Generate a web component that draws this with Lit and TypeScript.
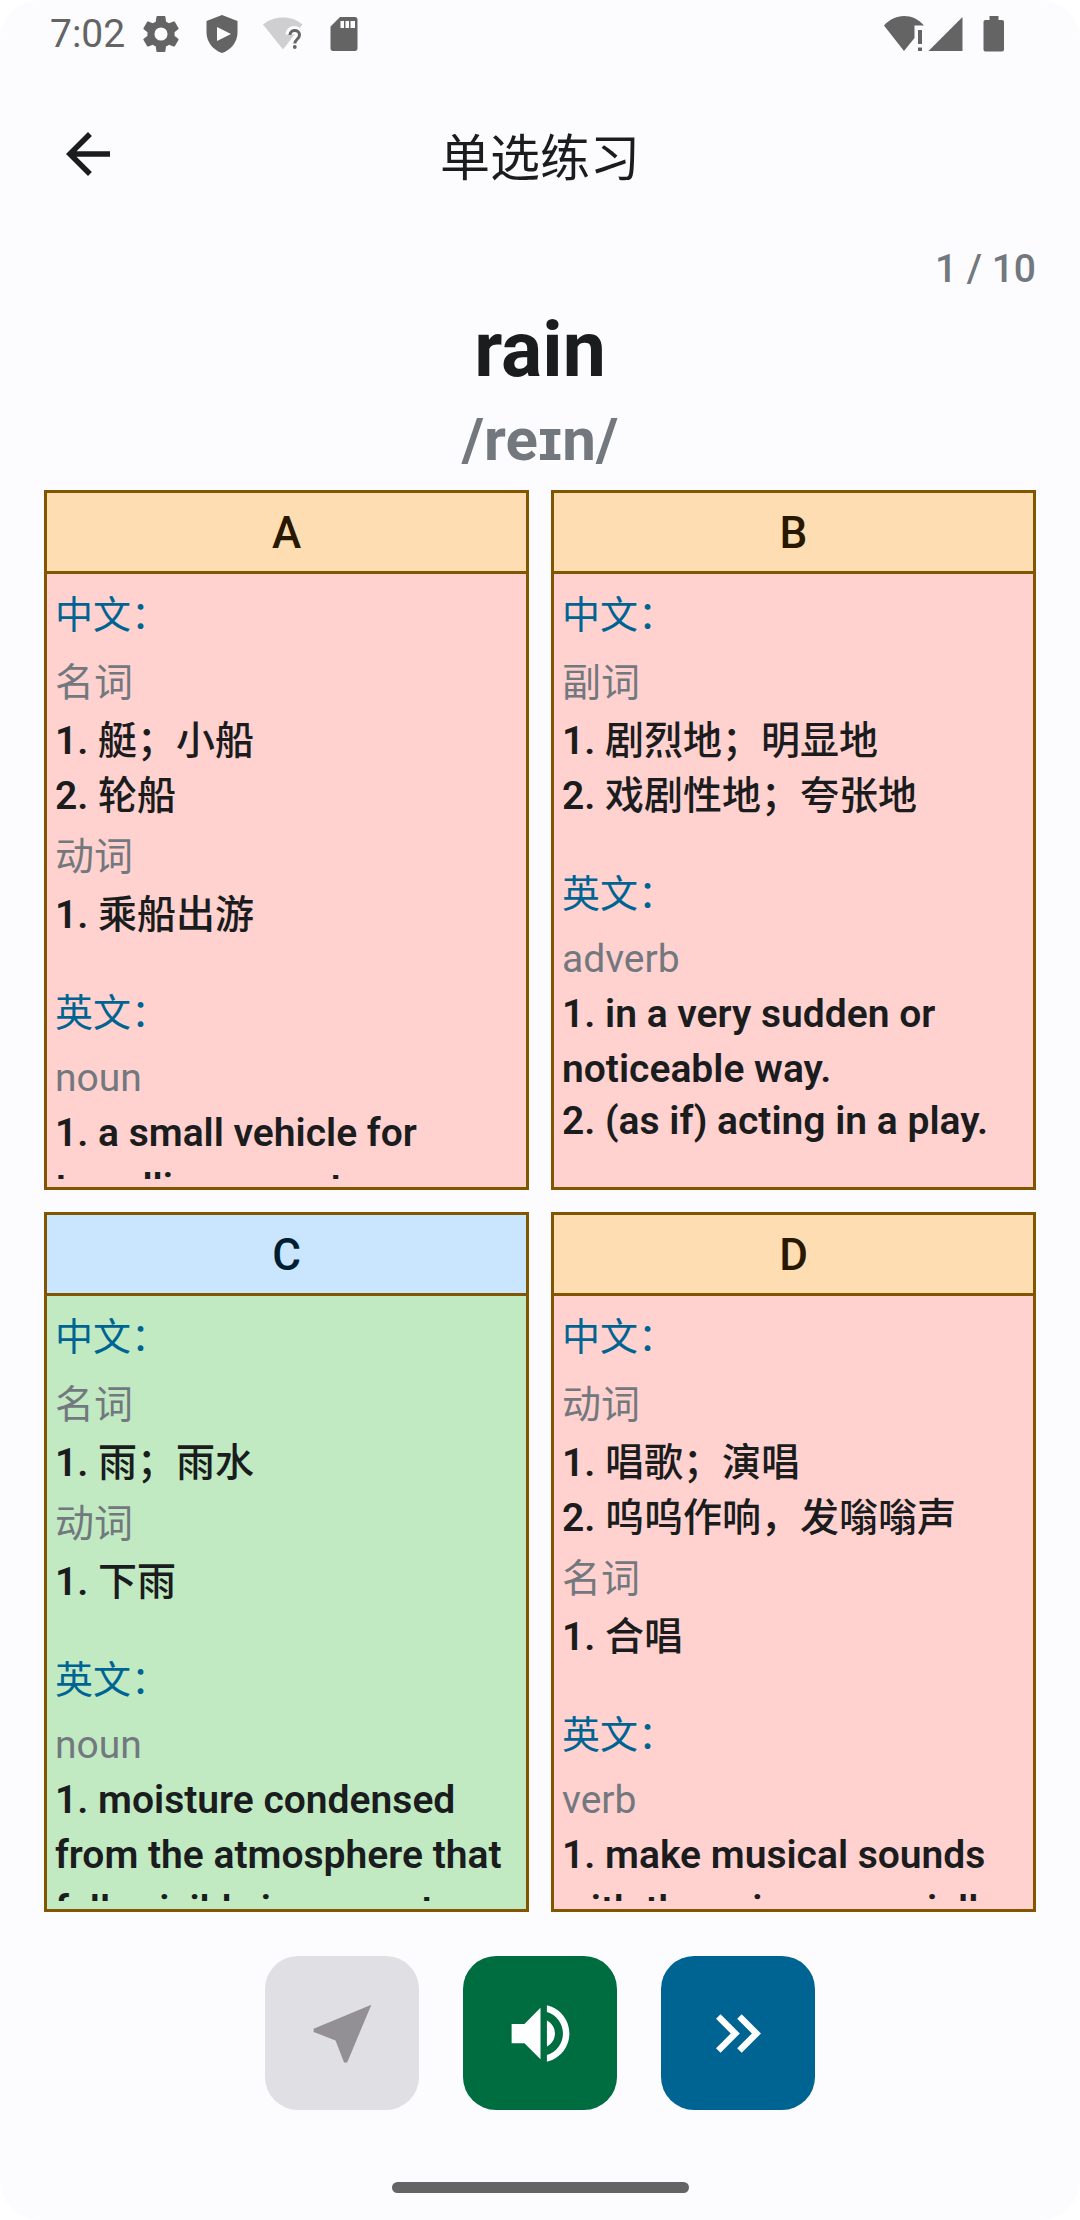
import { LitElement, html, svg, css } from "lit";
import { customElement, property } from "lit/decorators.js";
import { classMap } from "lit/directives/class-map.js";

interface Sense {
  pos: string;
  defs: string[];
}

interface Option {
  letter: string;
  correct: boolean;
  zh: Sense[];
  en: Sense[];
}

const OPTIONS: Option[] = [
  {
    letter: "A",
    correct: false,
    zh: [
      { pos: "名词", defs: ["艇；小船", "轮船"] },
      { pos: "动词", defs: ["乘船出游"] },
    ],
    en: [{ pos: "noun", defs: ["a small vehicle for travelling on water."] }],
  },
  {
    letter: "B",
    correct: false,
    zh: [{ pos: "副词", defs: ["剧烈地；明显地", "戏剧性地；夸张地"] }],
    en: [
      {
        pos: "adverb",
        defs: ["in a very sudden or noticeable way.", "(as if) acting in a play."],
      },
    ],
  },
  {
    letter: "C",
    correct: true,
    zh: [
      { pos: "名词", defs: ["雨；雨水"] },
      { pos: "动词", defs: ["下雨"] },
    ],
    en: [
      {
        pos: "noun",
        defs: ["moisture condensed from the atmosphere that falls visibly in separate drops."],
      },
    ],
  },
  {
    letter: "D",
    correct: false,
    zh: [
      { pos: "动词", defs: ["唱歌；演唱", "呜呜作响，发嗡嗡声"] },
      { pos: "名词", defs: ["合唱"] },
    ],
    en: [
      {
        pos: "verb",
        defs: ["make musical sounds with the voice, especially words with a tune."],
      },
    ],
  },
];

@customElement("status-bar")
export class StatusBar extends LitElement {
  static styles = css`
    :host {
      box-sizing: border-box;
      display: flex;
      justify-content: space-between;
      align-items: center;
      height: 66px;
      padding: 2px 66px 0 50px;
      color: #646464;
      fill: currentColor;
    }
    .group {
      display: flex;
      align-items: center;
    }
    .time {
      font-size: 39px;
      line-height: 44px;
      margin-right: 16px;
    }
    .notices {
      gap: 21px;
    }
    .icon {
      display: block;
      width: 40px;
      height: 40px;
    }
    .signal {
      margin-right: 10px;
    }
  `;

  render() {
    return html`
      <div class="group">
        <span class="time">7:02</span>
        <div class="group notices">
          <svg class="icon" viewBox="1 1 22 22" aria-hidden="true">
            <path
              d="M19.5 12c0-.3 0-.6-.1-.9l2.1-1.7c.2-.2.3-.5.1-.7l-2-3.4c-.1-.2-.4-.3-.7-.2l-2.5 1c-.5-.4-1-.7-1.600-.9l-.4-2.700c0-.3-.2-.4-.5-.4h-3.900c-.3 0-.5.2-.5.4l-.4 2.700c-.6.2-1.100.5-1.600.9l-2.500-1c-.2-.1-.5 0-.6.2l-2 3.400c-.1.2-.1.5.1.7l2.100 1.700c0 .3-.1.6-.1.9s0 .6.1.9l-2.100 1.700c-.2.2-.3.5-.1.7l2 3.400c.1.2.4.3.6.2l2.500-1c.5.4 1 .7 1.600.9l.4 2.700c0 .3.3.4.500.4h3.900c.3 0 .5-.2.500-.4l.4-2.700c.6-.2 1.100-.5 1.600-.9l2.500 1c.2.1.5 0 .7-.2l2-3.400c.1-.2.1-.5-.1-.7l-2.100-1.700c.1-.3.1-.6.1-.9zM12 15.600a3.600 3.600 0 1 1 0-7.200 3.600 3.600 0 0 1 0 7.200z"
            />
          </svg>
          <svg class="icon" viewBox="0 0 40 40" aria-hidden="true">
            <path
              fill-rule="evenodd"
              d="M20 1 35.500 7v11.500c0 9.500-6.500 17.500-15.500 20.500C11 36 4.500 28 4.500 18.500V7zM15 13v14l14-7z"
            />
          </svg>
          <svg class="icon" viewBox="0 0 40 40" aria-hidden="true">
            <path fill="#cfcfd2" d="M0 10.500C5.500 6 12.500 3.500 20 3.500s14 2.500 19.500 7L20 35.500z" />
            <path
              fill="none"
              stroke="#fcfcff"
              stroke-width="8"
              d="M26.500 20.500c0-6 9.500-6 9.500 0 0 4-4.700 4.500-4.700 8.500v5"
            />
            <path
              fill="none"
              stroke="currentColor"
              stroke-width="3"
              d="M27 21c0-6 9.500-6 9.500 0 0 4-4.700 4.500-4.700 8.500"
            />
            <circle cx="31.800" cy="33" r="1.900" />
          </svg>
          <svg class="icon" viewBox="0 0 40 40" aria-hidden="true">
            <path
              fill-rule="evenodd"
              d="M16 3h15c1.500 0 2.500 1 2.500 2.500v29c0 1.500-1 2.500-2.500 2.500H9c-1.500 0-2.500-1-2.500-2.500V12.500zM16.500 7v7h3.500V7zm5 0v7H25V7zm5 0v7H31V7z"
            />
          </svg>
        </div>
      </div>
      <div class="group">
        <svg class="icon" viewBox="0 0 40 40" aria-hidden="true">
          <path d="M0 11.500C5.500 5.500 12.500 2 20 2s14.500 3 20 9.500H30.500V24L20 37z" />
          <path d="M34 16h4v14h-4zM34 33.500h4V37h-4z" />
        </svg>
        <svg class="icon signal" viewBox="0 0 40 40" aria-hidden="true">
          <path d="M4.500 37 38.500 3v34z" />
        </svg>
        <svg class="icon" viewBox="0 0 40 40" aria-hidden="true">
          <path
            d="M15.500 2h9v4h3.500c1.200 0 2 .8 2 2v27.500c0 1.200-.8 2-2 2H11.500c-1.200 0-2-.8-2-2V8c0-1.200.8-2 2-2h4z"
          />
        </svg>
      </div>
    `;
  }
}

@customElement("option-card")
export class OptionCard extends LitElement {
  @property({ attribute: false }) option!: Option;

  static styles = css`
    :host {
      display: block;
      min-width: 0;
      min-height: 0;
    }
    .card {
      box-sizing: border-box;
      height: 100%;
      display: flex;
      flex-direction: column;
      border: 3px solid #825500;
      background: #ffd2cf;
    }
    .letter {
      flex: none;
      border: 0;
      border-bottom: 3px solid #825500;
      padding: 2px 0 0;
      background: #ffddb3;
      color: #291800;
      font: inherit;
      font-size: 44px;
      font-weight: 500;
      line-height: 76px;
    }
    .correct {
      background: #c1eac3;
    }
    .correct .letter {
      background: #cae6ff;
      color: #001e30;
    }
    .body {
      flex: 1;
      min-height: 0;
      margin: 8px;
      overflow: hidden;
    }
    .head,
    .pos,
    .def {
      margin: 0;
      font-size: 39px;
      font-weight: 400;
    }
    .head {
      padding-bottom: 2px;
      font-size: 38px;
      line-height: 66px;
      color: #006493;
    }
    .pos {
      padding: 3px 0 1px;
      line-height: 60px;
      color: #72787e;
    }
    .def {
      line-height: 55px;
      font-weight: 600;
      color: #1a1c1e;
    }
    .han {
      font-weight: 500;
    }
    .english {
      margin-top: 37px;
    }
    .english .pos {
      padding: 3px 0 0;
      line-height: 55px;
    }
    .english .def + .def {
      margin-top: -3px;
    }
  `;

  private chinese(list: Sense[]) {
    return list.map(
      (s) => html`
        <p class="pos">${s.pos}</p>
        ${s.defs.map(
          (d, i) => html`<p class="def">${`${i + 1}. `}<span class="han">${d}</span></p>`
        )}
      `
    );
  }

  private english(list: Sense[]) {
    return list.map(
      (s) => html`
        <p class="pos">${s.pos}</p>
        ${s.defs.map((d, i) => html`<p class="def">${`${i + 1}. ${d}`}</p>`)}
      `
    );
  }

  render() {
    const o = this.option;
    return html`
      <article class=${classMap({ card: true, correct: o.correct })}>
        <button class="letter" type="button">${o.letter}</button>
        <div class="body">
          <section>
            <h2 class="head">中文：</h2>
            ${this.chinese(o.zh)}
          </section>
          <section class="english">
            <h2 class="head">英文：</h2>
            ${this.english(o.en)}
          </section>
        </div>
      </article>
    `;
  }
}

const ACTIONS = [
  {
    kind: "submit",
    label: "提交",
    disabled: true,
    icon: svg`<path d="M21 3 3 10.530v.980l6.840 2.650L12.480 21h.980z" />`,
  },
  {
    kind: "speak",
    label: "朗读",
    disabled: false,
    icon: svg`<path d="M3 9v6h4l5 5V4L7 9H3zm13.500 3c0-1.770-1.020-3.290-2.500-4.030v8.050c1.480-.730 2.500-2.250 2.500-4.020zM14 3.230v2.060c2.890.860 5 3.540 5 6.710s-2.110 5.850-5 6.710v2.060c4.010-.910 7-4.490 7-8.770s-2.990-7.860-7-8.770z" />`,
  },
  {
    kind: "next",
    label: "下一题",
    disabled: false,
    icon: svg`<path d="M6.410 6 5 7.410 9.580 12 5 16.590 6.410 18l6-6zM13 6l-1.410 1.410L16.170 12l-4.580 4.590L13 18l6-6z" />`,
  },
];

@customElement("app-root")
export class AppRoot extends LitElement {
  static styles = css`
    :host {
      display: block;
      height: 100vh;
      background: #ffffff;
      font-family: Roboto, "Noto Sans CJK SC", sans-serif;
      color: #1a1c1e;
    }
    .screen {
      height: 100%;
      display: flex;
      flex-direction: column;
      overflow: hidden;
      border-radius: 40px;
      background: #fcfcff;
    }
    .bar {
      box-sizing: border-box;
      flex: none;
      display: grid;
      grid-template-columns: 66px 1fr 66px;
      align-items: center;
      height: 176px;
      padding: 0 55px;
    }
    .back {
      border: 0;
      padding: 0;
      background: none;
      color: inherit;
    }
    .back-icon {
      display: block;
      width: 66px;
      height: 66px;
      fill: currentColor;
    }
    .title {
      margin: 0;
      padding-top: 10px;
      text-align: center;
      font-size: 50px;
      font-weight: 400;
      line-height: 66px;
    }
    .count {
      margin: 0;
      padding: 0 44px 2px;
      text-align: right;
      font-size: 39px;
      font-weight: 500;
      line-height: 55px;
      color: #72787e;
    }
    .word,
    .ipa {
      margin: 0;
      text-align: center;
      font-weight: 700;
    }
    .word {
      font-size: 77px;
      line-height: 102px;
    }
    .ipa {
      font-size: 60px;
      line-height: 78px;
      color: #72787e;
    }
    .options {
      flex: 1;
      min-height: 0;
      display: grid;
      grid-template-columns: repeat(2, minmax(0, 1fr));
      grid-template-rows: repeat(2, minmax(0, 1fr));
      gap: 22px;
      padding: 11px 44px 44px;
    }
    .actions {
      display: flex;
      justify-content: center;
      gap: 44px;
      padding-bottom: 44px;
    }
    .action {
      display: grid;
      place-items: center;
      width: 154px;
      height: 154px;
      border: 0;
      border-radius: 33px;
      padding: 0;
      color: #ffffff;
    }
    .submit {
      background: #e0dfe3;
      color: #929094;
    }
    .speak {
      background: #006d41;
    }
    .next {
      background: #006493;
    }
    .action-icon {
      width: 77px;
      height: 77px;
      fill: currentColor;
    }
    .gesture {
      flex: none;
      display: grid;
      place-items: center;
      height: 66px;
    }
    .handle {
      width: 297px;
      height: 11px;
      border-radius: 6px;
      background: #646464;
    }
  `;

  render() {
    return html`
      <main class="screen">
        <status-bar></status-bar>
        <header class="bar">
          <button class="back" type="button" aria-label="返回">
            <svg class="back-icon" viewBox="0 0 24 24" aria-hidden="true">
              <path d="M20 11H7.830l5.590-5.590L12 4l-8 8 8 8 1.410-1.410L7.830 13H20z" />
            </svg>
          </button>
          <h1 class="title">单选练习</h1>
        </header>
        <p class="count">1 / 10</p>
        <p class="word">rain</p>
        <p class="ipa">/reɪn/</p>
        <div class="options">
          ${OPTIONS.map((o) => html`<option-card .option=${o}></option-card>`)}
        </div>
        <div class="actions">
          ${ACTIONS.map(
            (a) => html`
              <button
                type="button"
                class="action ${a.kind}"
                aria-label=${a.label}
                ?disabled=${a.disabled}
              >
                <svg class="action-icon" viewBox="0 0 24 24" aria-hidden="true">${a.icon}</svg>
              </button>
            `
          )}
        </div>
        <div class="gesture"><div class="handle"></div></div>
      </main>
    `;
  }
}
